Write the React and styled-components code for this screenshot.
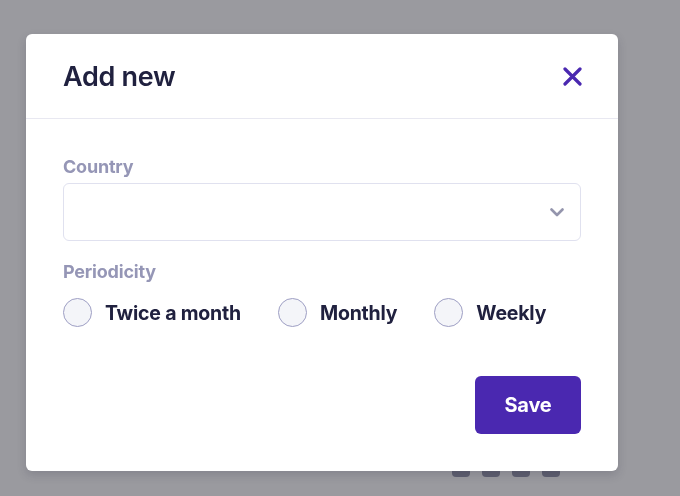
import React, { useState } from 'react'
import styled, { createGlobalStyle } from 'styled-components'

const GlobalStyle = createGlobalStyle`
  html, body {
    margin: 0;
    padding: 0;
    background: #9a9a9f;
    font-family: Inter, "Noto Sans", sans-serif;
  }
  * { box-sizing: border-box; }
`

const Page = styled.div`
  height: 100vh;
  display: flex;
  flex-direction: column;
  justify-content: flex-end;
  align-items: flex-end;
  padding: 0 120px 19px 0;
`

const Pager = styled.div`
  display: flex;
  gap: 12px;
`

const PagerDot = styled.span`
  width: 18px;
  height: 18px;
  border-radius: 4px;
  background: #5e5f70;
`

const Overlay = styled.div`
  position: fixed;
  inset: 0;
  padding: 34px 0 0 26px;
`

const Modal = styled.div`
  width: 592px;
  height: 437px;
  background: #fff;
  border-radius: 6px;
  box-shadow: 0 4px 10px rgba(40, 40, 60, 0.18);
  display: flex;
  flex-direction: column;
`

const Header = styled.div`
  height: 85px;
  display: flex;
  align-items: center;
  justify-content: space-between;
  padding: 0 36px 0 37px;
  border-bottom: 1px solid #e8e8f1;
`

const Title = styled.h2`
  margin: 0;
  font-size: 27px;
  font-weight: 620;
  color: #20213f;
  letter-spacing: -0.3px;
`

const CloseButton = styled.button`
  border: 0;
  background: none;
  padding: 0;
  width: 19px;
  height: 19px;
  display: flex;
  cursor: pointer;
`

const Body = styled.div`
  flex: 1;
  display: flex;
  flex-direction: column;
  padding: 37px 37px 37px 37px;
`

const Label = styled.div`
  font-size: 18px;
  line-height: 22px;
  font-weight: 650;
  color: #9596b6;
  letter-spacing: -0.2px;
  margin-top: ${p => p.$top || 0}px;
`

const Select = styled.div`
  margin-top: 5px;
  height: 58px;
  border: 1px solid #e0e1ef;
  border-radius: 6px;
  display: flex;
  align-items: center;
  justify-content: flex-end;
  padding-right: 16px;
`

const RadioRow = styled.div`
  margin-top: 15px;
  display: flex;
  align-items: center;
  gap: 37px;
`

const RadioItem = styled.label`
  display: flex;
  align-items: center;
  gap: 13px;
  cursor: pointer;
`

const Circle = styled.span`
  width: 29px;
  height: 29px;
  border-radius: 50%;
  border: 1px solid #9e9fc4;
  background: ${p => (p.$on ? '#4a28b0' : '#f4f5f9')};
`

const RadioText = styled.span`
  font-size: 19.5px;
  font-weight: 650;
  color: #20213f;
  letter-spacing: -0.2px;
`

const Footer = styled.div`
  margin-top: auto;
  display: flex;
  justify-content: flex-end;
`

const SaveButton = styled.button`
  width: 106px;
  height: 58px;
  border: 0;
  border-radius: 6px;
  background: #4a28b0;
  color: #fff;
  font-family: inherit;
  font-size: 20px;
  font-weight: 700;
  letter-spacing: -0.2px;
  cursor: pointer;
`

const options = ['Twice a month', 'Monthly', 'Weekly']

export default function App() {
  const [period, setPeriod] = useState(null)

  return (
    <>
      <GlobalStyle />
      <Page>
        <Pager>
          {[0, 1, 2, 3].map(i => <PagerDot key={i} />)}
        </Pager>
      </Page>
      <Overlay>
        <Modal>
          <Header>
            <Title>Add new</Title>
            <CloseButton aria-label="Close">
              <svg width="19" height="19" viewBox="0 0 19 19">
                <path d="M2 2L17 17M17 2L2 17" stroke="#4a28b0" strokeWidth="3.2" strokeLinecap="round" />
              </svg>
            </CloseButton>
          </Header>
          <Body>
            <Label>Country</Label>
            <Select>
              <svg width="14" height="9" viewBox="0 0 14 9">
                <path d="M1.5 1.5L7 7L12.5 1.5" fill="none" stroke="#9495ad" strokeWidth="2.6" strokeLinecap="round" strokeLinejoin="round" />
              </svg>
            </Select>
            <Label $top={20}>Periodicity</Label>
            <RadioRow>
              {options.map(o => (
                <RadioItem key={o} onClick={() => setPeriod(o)}>
                  <Circle $on={period === o} />
                  <RadioText>{o}</RadioText>
                </RadioItem>
              ))}
            </RadioRow>
            <Footer>
              <SaveButton>Save</SaveButton>
            </Footer>
          </Body>
        </Modal>
      </Overlay>
    </>
  )
}
